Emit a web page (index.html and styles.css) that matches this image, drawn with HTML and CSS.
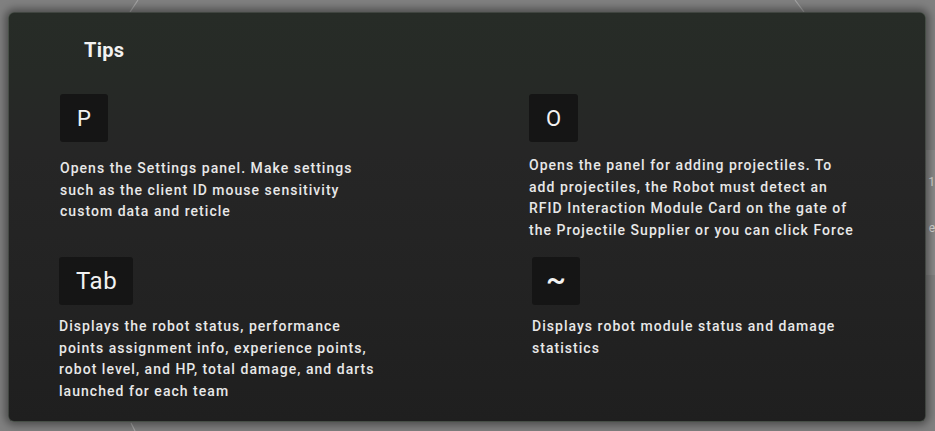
FILE: index.html
```html
<!DOCTYPE html>
<html lang="en">
<head>
<meta charset="utf-8">
<title>Tips</title>
<link rel="stylesheet" href="styles.css">
</head>
<body>
<div class="backdrop">
  <svg class="backdrop-lines" width="935" height="431" viewBox="0 0 935 431">
    <line x1="138" y1="0" x2="130" y2="12" />
    <line x1="795" y1="0" x2="804" y2="12" />
    <line x1="131" y1="423" x2="135" y2="431" />
  </svg>
  <div class="backdrop-side"><span>1</span><span>e</span></div>
</div>
<main class="panel">
  <h1 class="title">Tips</h1>
  <div class="tips">
    <section class="tip tip--p">
      <div class="key">P</div>
      <p class="desc">Opens the Settings panel. Make settings<br>such as the client ID mouse sensitivity<br>custom data and reticle</p>
    </section>
    <section class="tip tip--o">
      <div class="key">O</div>
      <p class="desc">Opens the panel for adding projectiles. To<br>add projectiles, the Robot must detect an<br>RFID Interaction Module Card on the gate of<br>the Projectile Supplier or you can click Force</p>
    </section>
    <section class="tip tip--tab">
      <div class="key key--wide">Tab</div>
      <p class="desc">Displays the robot status, performance<br>points assignment info, experience points,<br>robot level, and HP, total damage, and darts<br>launched for each team</p>
    </section>
    <section class="tip tip--tilde">
      <div class="key key--tilde">~</div>
      <p class="desc">Displays robot module status and damage<br>statistics</p>
    </section>
  </div>
</main>
</body>
</html>
```

FILE: styles.css
```css
* { box-sizing: border-box; }
html, body {
  margin: 0;
  padding: 0;
  width: 935px;
  height: 431px;
  overflow: hidden;
}
body {
  background: #808080;
  font-family: Roboto, "Liberation Sans", sans-serif;
  position: relative;
  padding: 12px 9px 9px 8px;
}
.backdrop {
  position: absolute;
  inset: 0;
  z-index: 0;
}
.backdrop-lines {
  position: absolute;
  left: 0;
  top: 0;
}
.backdrop-lines line {
  stroke: #a3a3a3;
  stroke-width: 1.2;
}
.backdrop-side {
  position: absolute;
  right: 0;
  top: 150px;
  width: 12px;
  height: 125px;
  background: #8a8a8a;
  color: #d8d8d8;
  font-size: 12px;
  display: flex;
  flex-direction: column;
  align-items: flex-end;
  padding-top: 26px;
  gap: 34px;
  line-height: 12px;
}
.panel {
  position: relative;
  z-index: 1;
  height: 410px;
  width: 918px;
  border-radius: 6px;
  border: 1px solid rgba(150, 170, 150, 0.28);
  background: linear-gradient(180deg, #272c27 0px, #262a26 60px, #262626 140px, #222222 300px, #1f1f1f 100%);
  box-shadow: 0 0 9px 3px rgba(0, 0, 0, 0.42);
  padding: 26px 0 0 51px;
  color: #ececec;
}
.title {
  margin: 0 0 32px 24px;
  font-size: 20px;
  font-weight: 700;
  line-height: 23px;
  letter-spacing: 0.3px;
  color: #f2f2f2;
}
.tips {
  display: grid;
  grid-template-columns: 470px 1fr;
  row-gap: 16px;
}
.tip {
  display: flex;
  flex-direction: column;
  align-items: flex-start;
}
.key {
  height: 48px;
  min-width: 48px;
  padding: 0 17px;
  border-radius: 3px;
  background: #151515;
  display: flex;
  align-items: center;
  justify-content: center;
  font-size: 22px;
  font-weight: 400;
  color: #f2f2f2;
}
.key--wide {
  font-size: 24px;
  letter-spacing: 0.6px;
  padding: 0 16px 0 17px;
}
.key--tilde {
  width: 48px;
  padding: 0 0 3px 0;
  font-size: 30px;
  font-weight: 500;
}
.desc {
  margin: 14px 0 0 0;
  font-size: 14px;
  font-weight: 500;
  line-height: 21.5px;
  letter-spacing: 1.03px;
  color: #e8e8e8;
}
.tip--p .desc { margin-top: 16px; }
.tip--o .desc { margin-top: 13px; }
.tip--o { margin-left: -1px; }
.tip--tab { margin-left: -1px; }
.tip--tab .desc { margin-top: 11px; }
.tip--tilde { margin-left: 2px; }
.tip--tilde .desc { margin-top: 11px; }
```
